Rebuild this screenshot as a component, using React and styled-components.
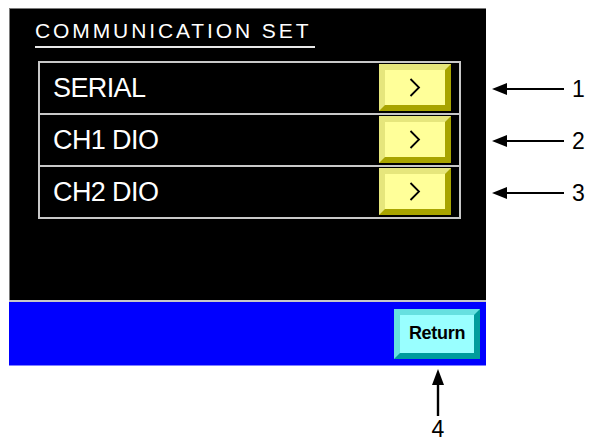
import React from 'react'
import styled, { createGlobalStyle } from 'styled-components'

const GlobalStyle = createGlobalStyle`
  body {
    margin: 0;
    background: #ffffff;
    font-family: "Liberation Sans", Arial, sans-serif;
  }
`

const rows = ['SERIAL', 'CH1 DIO', 'CH2 DIO']

function Chevron() {
  return (
    <svg width="12" height="19" viewBox="0 0 12 19">
      <polyline points="1.5,1 10,9.5 1.5,18" fill="none" stroke="#000" strokeWidth="1.8" />
    </svg>
  )
}

function ArrowLeft() {
  return (
    <svg width="72" height="14" viewBox="0 0 72 14">
      <polygon points="0,7 15,1 15,13" fill="#000" />
      <line x1="14" y1="7" x2="72" y2="7" stroke="#000" strokeWidth="2.2" />
    </svg>
  )
}

function ArrowUp() {
  return (
    <svg width="14" height="47" viewBox="0 0 14 47">
      <polygon points="7,0 1,16 13,16" fill="#000" />
      <line x1="7" y1="15" x2="7" y2="47" stroke="#000" strokeWidth="2.4" />
    </svg>
  )
}

export default function App() {
  return (
    <>
      <GlobalStyle />
      <Page>
        <Left>
          <Screen>
            <Display>
              <Title>COMMUNICATION SET</Title>
              <Table>
                {rows.map((r) => (
                  <Row key={r}>
                    <RowLabel>{r}</RowLabel>
                    <NextButton>
                      <Chevron />
                    </NextButton>
                  </Row>
                ))}
              </Table>
            </Display>
            <Divider />
            <Footer>
              <ReturnButton>Return</ReturnButton>
            </Footer>
          </Screen>
          <BottomCallout>
            <ArrowUp />
            <CalloutNum>4</CalloutNum>
          </BottomCallout>
        </Left>
        <SideCallouts>
          {[1, 2, 3].map((n) => (
            <SideCallout key={n}>
              <ArrowLeft />
              <CalloutNum>{n}</CalloutNum>
            </SideCallout>
          ))}
        </SideCallouts>
      </Page>
    </>
  )
}

const Page = styled.div`
  display: flex;
  padding: 8px 0 0 9px;
`

const Left = styled.div`
  display: flex;
  flex-direction: column;
`

const Screen = styled.div`
  width: 477px;
  display: flex;
  flex-direction: column;
`

const Display = styled.div`
  height: 292px;
  box-sizing: border-box;
  background: #000;
  border-top: 1px solid #7a7a7a;
  border-left: 1px solid #7a7a7a;
  padding: 10px 0 0 25px;
`

const Title = styled.div`
  display: inline-block;
  color: #fff;
  font-size: 21px;
  line-height: 23px;
  letter-spacing: 2.9px;
  white-space: nowrap;
  padding-bottom: 4px;
  border-bottom: 2px solid #e8e8e8;
  margin-bottom: 13px;
  width: 280px;
`

const Table = styled.div`
  width: 423px;
  margin-left: 3px;
  box-sizing: border-box;
  border: 2px solid #c8c8c8;
  border-bottom: none;
`

const Row = styled.div`
  height: 52px;
  box-sizing: border-box;
  border-bottom: 2px solid #c8c8c8;
  display: flex;
  align-items: center;
  justify-content: space-between;
  padding: 0 8px 0 13px;
`

const RowLabel = styled.span`
  color: #fff;
  font-size: 27px;
  letter-spacing: -0.6px;
`

const NextButton = styled.div`
  width: 72px;
  height: 47px;
  box-sizing: border-box;
  background: #ffff99;
  border: 6px solid;
  border-color: #e6e67c #a8a400 #a8a400 #e6e67c;
  display: flex;
  align-items: center;
  justify-content: center;
  margin-bottom: 1px;
`

const Divider = styled.div`
  height: 2px;
  background: #c8c8c8;
`

const Footer = styled.div`
  height: 64px;
  background: #0000ff;
  border-bottom: 1px solid #8080ff;
  box-sizing: border-box;
  display: flex;
  align-items: center;
  justify-content: flex-end;
  padding-right: 6px;
`

const ReturnButton = styled.div`
  width: 86px;
  height: 50px;
  box-sizing: border-box;
  background: #99ffff;
  border: 6px solid;
  border-color: #66e0e0 #009c9c #009c9c #66e0e0;
  display: flex;
  align-items: center;
  justify-content: center;
  font-weight: bold;
  font-size: 18px;
  letter-spacing: -0.3px;
  color: #000;
`

const BottomCallout = styled.div`
  display: flex;
  flex-direction: column;
  align-items: center;
  align-self: flex-end;
  margin-right: 41px;
  margin-top: 3px;
`

const SideCallouts = styled.div`
  display: flex;
  flex-direction: column;
  margin: 55px 0 0 6px;
`

const SideCallout = styled.div`
  height: 52px;
  display: flex;
  align-items: center;
  gap: 8px;
`

const CalloutNum = styled.span`
  font-size: 23px;
  line-height: 26px;
  color: #000;
`
